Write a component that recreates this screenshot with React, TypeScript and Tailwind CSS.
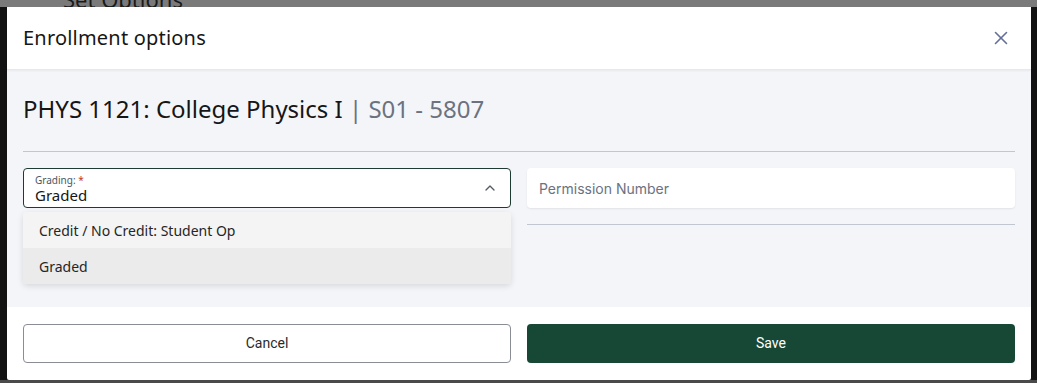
import { ChevronUp, X } from 'lucide-react'

const OPTIONS = ['Credit / No Credit: Student Op', 'Graded']

function GradingSelect() {
  return (
    <div className="relative">
      <div className="h-[40px] rounded-[4px] border border-[#1d3b30] bg-white pl-[11px] pr-[12px] flex items-center">
        <div className="flex-1 min-w-0 leading-none">
          <div className="text-[10px] text-[#4b5563] leading-[12px] mt-[2px]">
            Grading: <span className="text-[#c0392b]">*</span>
          </div>
          <div className="text-[15px] text-[#161616] leading-[18px]">Graded</div>
        </div>
        <ChevronUp size={16} strokeWidth={2} className="text-[#555b66]" />
      </div>

      {/* open listbox */}
      <div className="absolute left-0 right-0 top-[44px] z-10 rounded-[4px] overflow-hidden shadow-[0_2px_6px_rgba(0,0,0,0.12)]">
        {OPTIONS.map((o, i) => (
          <div
            key={o}
            className={`h-[36px] flex items-center px-[16px] text-[14px] text-[#262626] ${i === 1 ? 'bg-[#ebebeb]' : 'bg-[#f4f4f4]'}`}
          >
            {o}
          </div>
        ))}
      </div>
    </div>
  )
}

export default function App() {
  return (
    <div
      className="w-[1037px] h-[383px] bg-[#121212] flex flex-col overflow-hidden"
      style={{ fontFamily: '"Noto Sans", "Open Sans", sans-serif' }}
    >
      {/* dimmed page behind the dialog */}
      <div className="h-[7px] bg-[#7a7a7a] relative overflow-hidden shrink-0">
        <span className="absolute left-[63px] top-[-17px] text-[22px] text-[#1a1a1a]">Set Options</span>
      </div>

      <div className="flex flex-1 min-h-0">
        <div className="w-[7px] shrink-0" />

        {/* dialog */}
        <div className="w-[1024px] h-[373px] bg-white flex flex-col rounded-b-[2px]">
          <div className="h-[63px] shrink-0 flex items-center justify-between pl-[16px] pr-[19px] border-b border-[#e6e8ee] shadow-[0_1px_2px_rgba(0,0,0,0.05)] z-[1]">
            <h2 className="text-[20px] text-[#161616] font-normal tracking-[0.2px]">Enrollment options</h2>
            <X size={22} strokeWidth={1.75} className="text-[#64709a]" />
          </div>

          <div className="h-[237px] shrink-0 bg-[#f4f5f9] px-[16px] pt-[24px]">
            <h3 className="text-[24px] leading-[30px] text-[#161616] font-normal">
              PHYS 1121: College Physics I <span className="text-[#6b7280]">| S01 - 5807</span>
            </h3>
            <div className="mt-[27px] border-t border-[#c2c6d0]" />

            <div className="mt-[16px] grid grid-cols-2 gap-[16px]">
              <GradingSelect />
              <div>
                <div className="h-[40px] rounded-[4px] bg-white shadow-[0_1px_2px_rgba(0,0,0,0.08)] flex items-center px-[12px] text-[14px] text-[#6b7280]" style={{ fontFamily: 'Inter, "Noto Sans", sans-serif' }}>
                  Permission Number
                </div>
                <div className="mt-[16px] border-t border-[#c2c6d0]" />
              </div>
            </div>
          </div>

          <div className="flex-1 grid grid-cols-2 gap-[16px] px-[16px] pt-[17px]">
            <button className="h-[39px] rounded-[4px] border border-[#8a8d93] bg-white text-[14px] text-[#2a2a2a]" style={{ fontFamily: 'Roboto, "Noto Sans", sans-serif' }}>
              Cancel
            </button>
            <button className="h-[39px] rounded-[4px] bg-[#174836] text-[14px] text-white font-normal" style={{ fontFamily: 'Roboto, "Noto Sans", sans-serif' }}>
              Save
            </button>
          </div>
        </div>

        <div className="w-[6px] shrink-0" />
      </div>

      <div className="h-[3px] shrink-0 bg-[#4a4a4a]" />
    </div>
  )
}
